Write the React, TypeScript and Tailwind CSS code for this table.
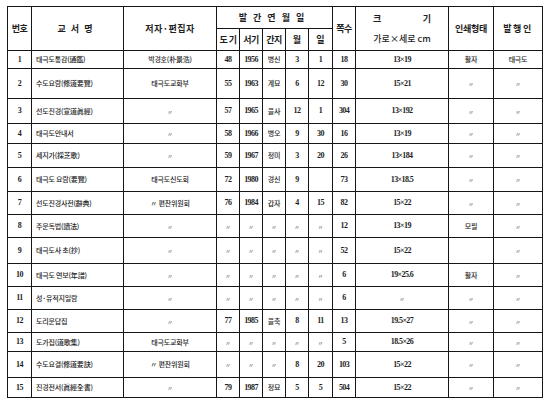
import React from "react";

const D = "〃";

// 번호, 교서명, 저자·편집자, 도기, 서기, 간지, 월, 일, 쪽수, 크기, 인쇄형태, 발행인
const rows: string[][] = [
	["1", "태극도통감(通鑑)", "박경호(朴景浩)", "48", "1956", "병신", "3", "1", "18", "13×19", "활자", "태극도"],
	["2", "수도요람(修道要覽)", "태극도교화부", "55", "1963", "계묘", "6", "12", "30", "15×21", D, D],
	["3", "선도진경(宣道眞經)", D, "57", "1965", "을사", "12", "1", "304", "13×192", D, D],
	["4", "태극도안내서", D, "58", "1966", "병오", "9", "30", "16", "13×19", D, D],
	["5", "세지가(採芝歌)", D, "59", "1967", "정미", "3", "20", "26", "13×184", D, D],
	["6", "태극도 요람(要覽)", "태극도신도회", "72", "1980", "경신", "9", "", "73", "13×18.5", D, D],
	["7", "선도진경사전(辭典)", "〃 편찬위원회", "76", "1984", "갑자", "4", "15", "82", "15×22", D, D],
	["8", "주문독법(讀法)", D, D, D, D, D, D, "12", "13×19", "모필", D],
	["9", "태극도사 초(抄)", D, D, D, D, D, D, "52", "15×22", "", D],
	["10", "태극도 연보(年譜)", D, D, D, D, D, D, "6", "19×25.6", "활자", D],
	["11", "성·유적지일람", D, D, D, D, D, D, "6", D, D, D],
	["12", "도리문답집", D, "77", "1985", "을축", "8", "11", "13", "19.5×27", D, D],
	["13", "도가집(道歌集)", "태극도교화부", D, D, D, D, D, "5", "18.5×26", D, D],
	["14", "수도요결(修道要訣)", "〃 편찬위원회", D, D, D, "8", "20", "103", "15×22", D, D],
	["15", "진경전서(眞經全書)", D, "79", "1987", "정묘", "5", "5", "504", "15×22", D, D],
];

const serifCols = [0, 3, 4, 6, 7, 8, 9];

const cell = "border-r border-b border-[#161616] flex items-center justify-center overflow-hidden whitespace-nowrap";
const head = `${cell} font-['Noto_Sans_CJK_KR',sans-serif] text-[9px] font-bold text-[#1e1e1e]`;

function Cell({ value, col }: { value: string; col: number }) {
	if (value === D) {
		return (
			<div className={`${cell} font-['Noto_Sans_CJK_KR',sans-serif] text-[6px] text-[#555]`}>
				{D}
			</div>
		);
	}
	if (col === 1) {
		return (
			<div
				className={`${cell} justify-start pl-[4px] font-['Noto_Sans_CJK_KR',sans-serif] font-medium text-[7px] text-[#1e1e1e] tracking-[-0.2px]`}
			>
				{value}
			</div>
		);
	}
	if (serifCols.includes(col)) {
		return (
			<div
				className={`${cell} font-['Liberation_Serif',serif] font-bold text-[8px] tracking-[-0.6px] text-[#1e1e1e]`}
			>
				{value}
			</div>
		);
	}
	return (
		<div
			className={`${cell} font-['Noto_Sans_CJK_KR',sans-serif] font-medium text-[7px] text-[#1e1e1e] tracking-[-0.2px]`}
		>
			{value}
		</div>
	);
}

export default function App() {
	return (
		<div className="w-[548px] h-[408px] bg-white pt-[6px] pl-[7px]">
			<div className="grid w-fit border-l border-t border-[#161616] grid-cols-[24px_92px_93px_23px_23px_23px_23px_24px_23px_93px_45px_49px] grid-rows-[22px_22px_18px_30px_25px_20px_24px_24px_23px_23px_26px_23px_23px_23px_19px_26px_20px]">
				<div className={`${head} row-span-2 text-[8.5px] tracking-[-0.5px]`}>번호</div>
				<div className={`${head} row-span-2 tracking-[5px]`}>교서명</div>
				<div className={`${head} row-span-2 tracking-[0.5px]`}>저자·편집자</div>
				<div className={`${head} col-span-5 tracking-[6px]`}>발간연월일</div>
				<div className={`${head} row-span-2 text-[8.5px] tracking-[-0.5px]`}>쪽수</div>
				<div className={`${head} row-span-2 flex-col gap-[6px]`}>
					<div className="flex w-[58px] justify-between">
						<span>크</span>
						<span>기</span>
					</div>
					<div className="font-medium text-[9px]">가로×세로 cm</div>
				</div>
				<div className={`${head} row-span-2 text-[8.5px] tracking-[-0.3px]`}>인쇄형태</div>
				<div className={`${head} row-span-2 tracking-[1.5px]`}>발행인</div>
				<div className={`${head} text-[8.5px] tracking-[-0.5px]`}>도 기</div>
				<div className={`${head} text-[8.5px] tracking-[-0.5px]`}>서기</div>
				<div className={`${head} text-[8.5px] tracking-[-0.5px]`}>간지</div>
				<div className={`${head}`}>월</div>
				<div className={`${head}`}>일</div>
				{rows.map((row, r) =>
					row.map((value, c) => <Cell key={`${r}-${c}`} value={value} col={c} />),
				)}
			</div>
		</div>
	);
}
